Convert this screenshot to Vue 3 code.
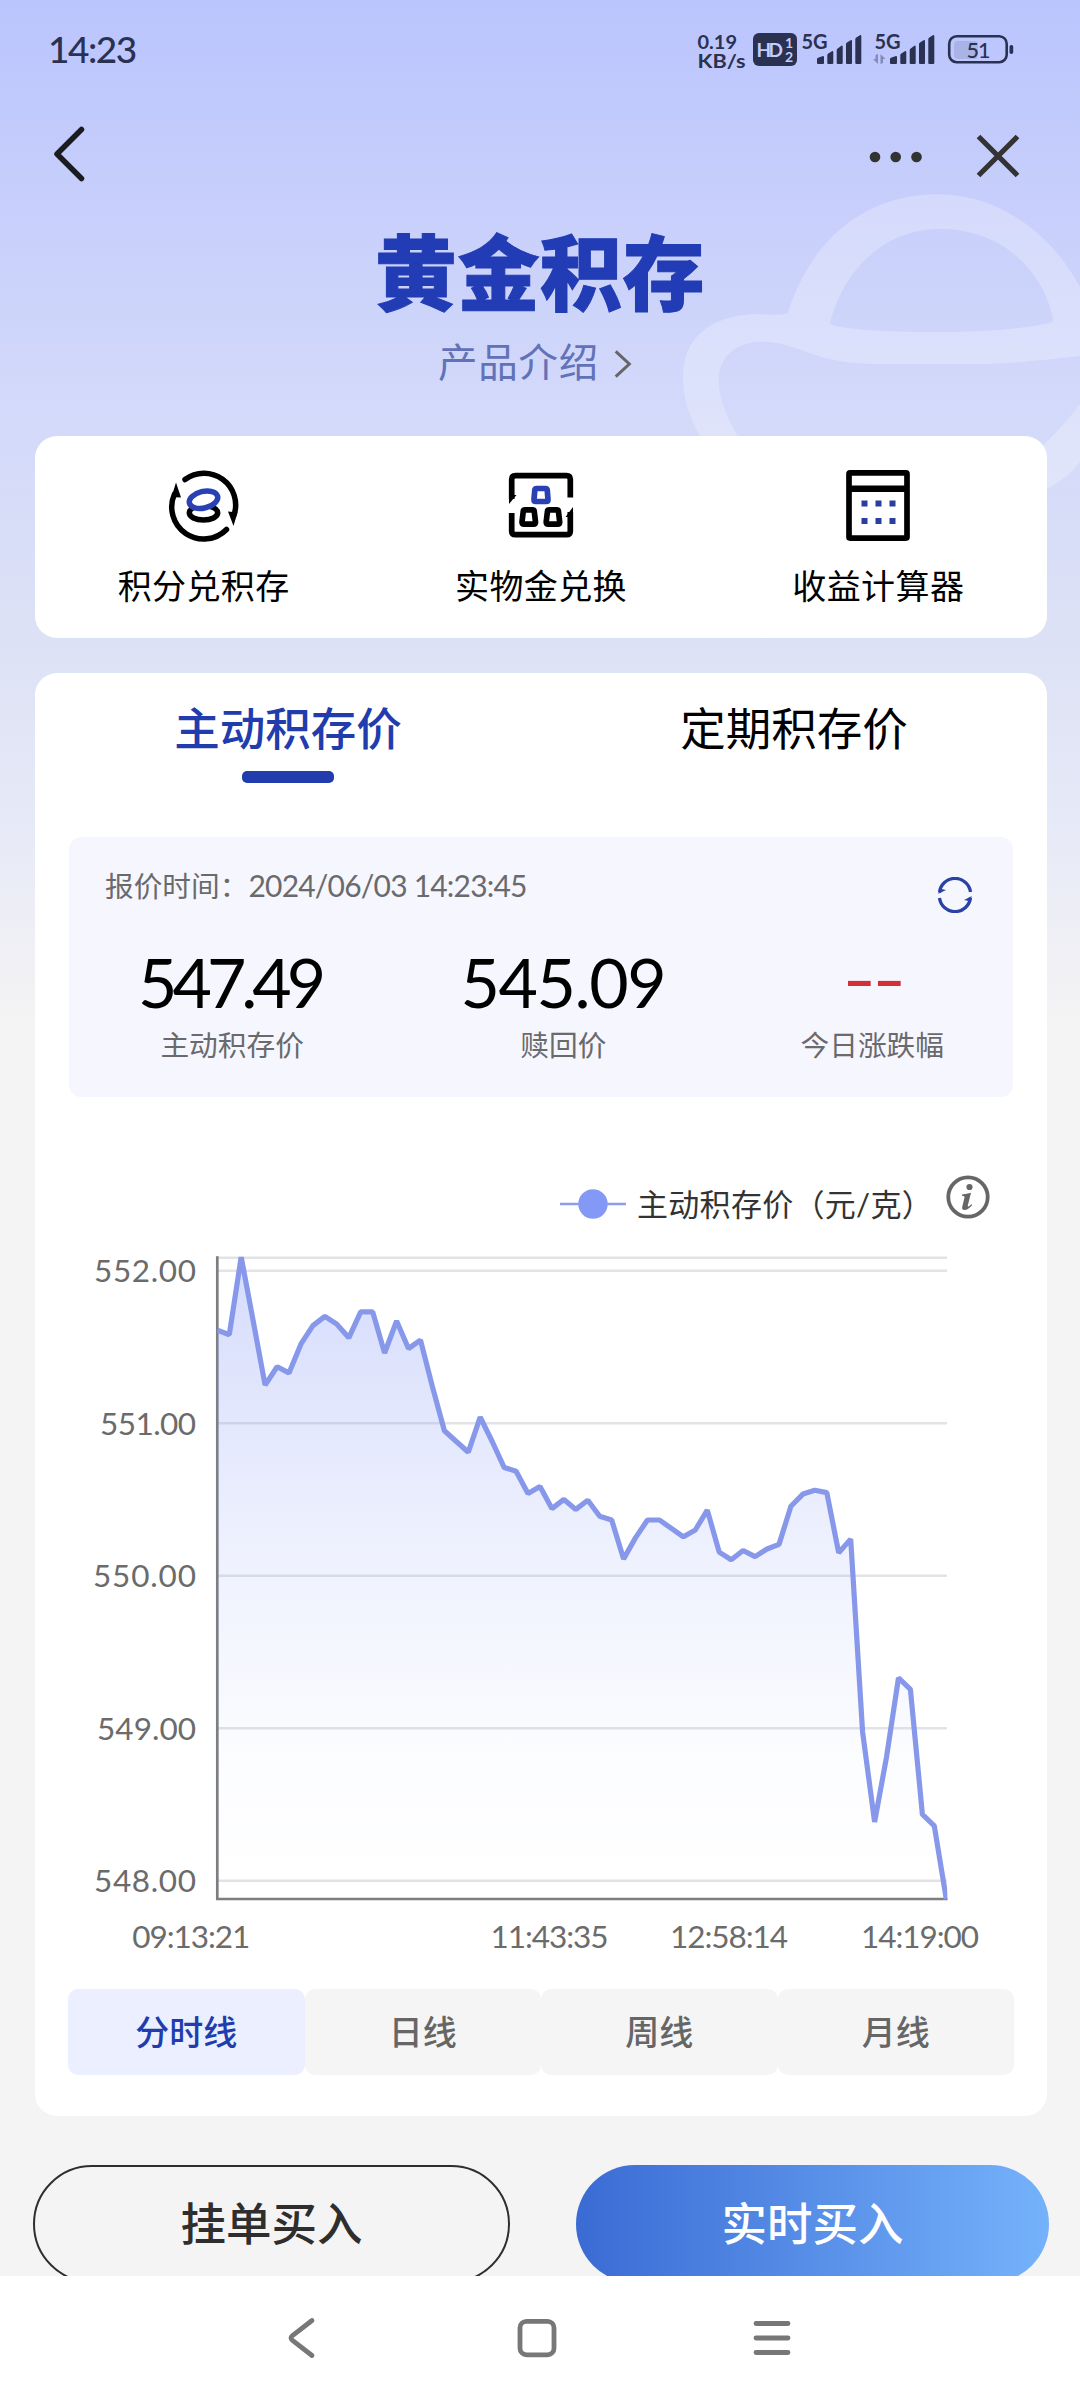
<script setup>
const shortcuts = [
  { key: 'points', label: '积分兑积存' },
  { key: 'physical', label: '实物金兑换' },
  { key: 'calc', label: '收益计算器' },
]
const quotes = [
  { key: 'buy', value: '547.49', label: '主动积存价' },
  { key: 'redeem', value: '545.09', label: '赎回价' },
  { key: 'change', value: '--', label: '今日涨跌幅' },
]
const periods = ['分时线', '日线', '周线', '月线']

const prices = [
  551.61, 551.58, 552.09, 551.67, 551.25, 551.37, 551.33, 551.52, 551.64, 551.7, 551.65,
  551.56, 551.73, 551.73, 551.46, 551.67, 551.49, 551.545, 551.24, 550.95, 550.88, 550.81,
  551.04, 550.88, 550.71, 550.685, 550.54, 550.585, 550.44, 550.5, 550.435, 550.495, 550.39,
  550.365, 550.11, 550.25, 550.365, 550.365, 550.31, 550.255, 550.3, 550.43, 550.155, 550.105,
  550.165, 550.125, 550.175, 550.205, 550.455, 550.535, 550.56, 550.545, 550.15, 550.24,
  548.975, 548.385, 548.81, 549.33, 549.255, 548.435, 548.36, 547.88,
]
const plot = { left: 182.3, right: 911.3, top: 23.7, bottom: 665, y552: 36.7, unit: 152.5 }
const yOf = (p) => plot.y552 + (552 - p) * plot.unit
const step = (plot.right - plot.left) / (prices.length - 1)
const line = prices.map((p, i) => `${(plot.left + i * step).toFixed(1)},${yOf(p).toFixed(1)}`).join(' ')
const area = `${plot.left},${plot.bottom} ${line} ${plot.right},${plot.bottom}`
const yTicks = [
  { v: 552, w: 102 },
  { v: 551, w: 96 },
  { v: 550, w: 103 },
  { v: 549, w: 99 },
  { v: 548, w: 102 },
]
const xTicks = [
  { x: 155.8, text: '09:13:21' },
  { x: 514, text: '11:43:35' },
  { x: 693.5, text: '12:58:14' },
  { x: 884.5, text: '14:19:00' },
]
const signals = [142, 215]
const bars = [
  'M0 26.500v-4q0-1 1-1.300l5-1.700q1 0 1 1v6q0 1-1 1h-5q-1 0-1-1z',
  'M10.300 26.500v-8q0-1 1-1.500l4-2.500q1 0 1 1v11q0 1-1 1h-4q-1 0-1-1z',
  'M19.700 26.500v-13q0-1 1-1.500l4-3q1 0 1 1v16.500q0 1-1 1h-4q-1 0-1-1z',
  'M29 26.500v-19q0-1 1-1.500l4-2.500q1 0 1 1v22q0 1-1 1h-4q-1 0-1-1z',
  'M38.300 26.500v-24q0-1 1-1.500l4-2.500q1 0 1 1v27q0 1-1 1h-4q-1 0-1-1z',
]
</script>

<template>
  <div class="page">
    <div class="screen">
      <svg class="deco" width="420" height="360" viewBox="660 180 420 360">
        <path
          fill="#fff"
          fill-opacity=".25"
          fill-rule="evenodd"
          d="M700 436C688 415 683 396 683 377C683 340 708 314 760 314Q778 316 787.700 313.300C812 235 870 194.300 937 194.300C1005 194.300 1055 240 1080 287V356C1045 360 1010 364 973 364H880C850 364 830 360 815 355C795 348 780 341.700 762 341.700C735 341.700 718.700 358 718.700 380C718.700 400 728 419 738 436ZM830 323C842 275 880 229 940 229C1000 229 1042 268 1053 318Q1054 322 1050 323C1020 329 985 332 940 332C900 332 865 331 840 327Q829 325 830 323Z"
        />
        <path fill="#fff" fill-opacity=".25" d="M1080 404Q1062 428 1042 446V491Q1064 482 1080 462Z" />
      </svg>

      <header class="status">
        <span class="clock">14:23</span>
        <svg width="330" height="44" viewBox="0 0 330 44" class="status-icons">
          <g fill="#2b3150">
            <text x="22.500" y="21" font-size="19" font-weight="700" textLength="39.500" lengthAdjust="spacingAndGlyphs">0.19</text>
            <text x="22.500" y="39.500" font-size="18.500" font-weight="700" textLength="48" lengthAdjust="spacingAndGlyphs">KB/s</text>
            <rect x="78" y="5" width="44" height="33" rx="6" />
            <g v-for="(x, i) in signals" :key="x">
              <text :x="x - 15.500" y="20.500" font-size="20" font-weight="700" textLength="26">5G</text>
              <path v-for="b in bars" :key="b" :d="b" :transform="`translate(${x} 8.500)`" />
              <g v-if="i" opacity=".4">
                <path d="M203 26v10l-5-5h2.500v-4z M205.500 36v-10l5 5h-2.500v4z" />
              </g>
            </g>
            <rect x="334.500" y="17" width="3.700" height="9" rx="1.800" />
          </g>
          <g fill="#c3ccfc" font-weight="700">
            <text x="81.500" y="29" font-size="19" textLength="26.500">HD</text>
            <text x="110" y="20" font-size="14" textLength="8">1</text>
            <text x="110" y="34" font-size="14" textLength="9">2</text>
          </g>
          <rect x="274.200" y="8.200" width="57.500" height="26" rx="7.500" fill="none" stroke="#2b3150" stroke-width="2.600" />
        </svg>
        <div class="battery"><i></i><b>51</b></div>
      </header>

      <nav class="topbar">
        <svg width="34" height="58" viewBox="0 0 34 58" fill="none" stroke="#1b1c22" stroke-width="5.500" stroke-linecap="round" stroke-linejoin="round">
          <path d="M29.500 4.500L5 29L29.500 53.500" />
        </svg>
        <div class="topbar-right">
          <svg width="54" height="12" viewBox="0 0 54 12" fill="#333" class="dots">
            <circle cx="6" cy="6" r="5.300" /><circle cx="26.700" cy="6" r="5.300" /><circle cx="47.500" cy="6" r="5.300" />
          </svg>
          <svg width="44" height="44" viewBox="0 0 44 44" stroke="#333" stroke-width="5.200" class="close">
            <path d="M2.500 2.500L41.500 41.500M41.500 2.500L2.500 41.500" />
          </svg>
        </div>
      </nav>

      <h1 class="title">黄金积存</h1>
      <div class="intro">
        <span>产品介绍</span>
        <svg width="20" height="30" viewBox="0 0 20 30" fill="none" stroke="#666" stroke-width="3">
          <path d="M2.700 2.300L16.300 15L2.700 27.700" />
        </svg>
      </div>

      <section class="card shortcuts">
        <div v-for="s in shortcuts" :key="s.key" class="shortcut">
          <svg v-if="s.key === 'points'" width="72" height="72" viewBox="0 0 72 72" fill="none" stroke-width="5.500" stroke-linecap="round">
            <path stroke="#000" d="M17 9.500A31.700 31.700 0 0 1 66 45M58.500 59.500A32 32 0 0 1 6.500 24" />
            <path fill="#000" d="M8 12.500L3.500 27L13 27.500Z M65.500 56L69.500 42.500L60 41.500Z" />
            <ellipse cx="35.500" cy="42.800" rx="14.200" ry="7.300" stroke="#000" />
            <ellipse cx="35.500" cy="29.700" rx="14.500" ry="8.300" transform="rotate(-14 35.500 29.700)" stroke="#2a41b5" fill="#fff" />
          </svg>
          <svg v-else-if="s.key === 'physical'" width="72" height="72" viewBox="0 0 72 72" fill="none" stroke-width="5.700" stroke-linejoin="round">
            <path stroke="#000" d="M6.700 29V9.500Q6.700 5.700 10.500 5.700H61.500Q65.300 5.700 65.300 9.500V27.500M65.300 42V61Q65.300 64.700 61.500 64.700H10.500Q6.700 64.700 6.700 61V43" />
            <path fill="#000" d="M4 34L11.500 25H4Z M68 37L60.500 47H68Z" />
            <path stroke="#2a41b5" d="M31.500 18.500H40.500Q42 18.500 42.200 20L43 29.500Q43 31.500 41.200 31.500H30.800Q29 31.500 29 29.500L29.800 20Q30 18.500 31.500 18.500Z" />
            <path stroke="#000" d="M20 39.800H27.500Q29 39.800 29.200 41L30.500 52Q30.500 54.200 28.500 54.200H19Q17 54.200 17 52L18.300 41Q18.500 39.800 20 39.800Z M44.200 39.800H51.700Q53.200 39.800 53.400 41L54.700 52Q54.700 54.200 52.700 54.200H43.200Q41.200 54.200 41.200 52L42.500 41Q42.700 39.800 44.200 39.800Z" />
          </svg>
          <svg v-else width="72" height="72" viewBox="0 0 72 72">
            <rect x="7" y="2.900" width="58" height="65.200" rx="1" fill="none" stroke="#000" stroke-width="5.700" />
            <path d="M5 18.700H67" stroke="#000" stroke-width="6.600" />
            <path d="M19.500 33.500h34M19.500 51h34" stroke="#2a3f9d" stroke-width="6" stroke-dasharray="6 8" />
          </svg>
          <span>{{ s.label }}</span>
        </div>
      </section>

      <section class="card main">
        <div class="tabs">
          <div class="tab active"><span>主动积存价</span><i></i></div>
          <div class="tab"><span>定期积存价</span></div>
        </div>

        <div class="quote">
          <div class="quote-head">
            <p>报价时间：<span>2024/06/03 14:23:45</span></p>
            <svg width="36" height="36" viewBox="0 0 36 36" fill="none" stroke="#2a41a5" stroke-width="3.300">
              <path d="M2.500 15.500A15.600 15.600 0 0 1 33.500 15M33.500 20.500A15.600 15.600 0 0 1 2.500 21" />
              <path d="M1 17L9 13L4.500 12Z M35 19L27 23L31.500 24Z" fill="#2a41a5" stroke="none" />
            </svg>
          </div>
          <div class="quote-row">
            <div v-for="q in quotes" :key="q.key" class="quote-item" :class="q.key">
              <strong>{{ q.value }}</strong>
              <span>{{ q.label }}</span>
            </div>
          </div>
        </div>

        <div class="legend">
          <svg width="66" height="32" viewBox="0 0 66 32">
            <path d="M0 16H66" stroke="#8d9df0" stroke-width="2.600" />
            <circle cx="33" cy="16" r="14.700" fill="#8499f6" />
          </svg>
          <span>主动积存价（元/克）</span>
          <svg class="info" width="44" height="44" viewBox="0 0 44 44">
            <circle cx="22" cy="22" r="19.700" fill="none" stroke="#666" stroke-width="3.800" />
            <circle cx="23.500" cy="12" r="3.100" fill="#666" />
            <path d="M16 19.500Q21 19 25 17.800L21.800 30.500Q21.500 32 23 31.200L25.500 29.200L26.300 30Q22 35 18.500 35Q15.500 35 16.300 31.500L18.500 22.500Q18.800 20.800 16 20.800Z" fill="#666" />
          </svg>
        </div>

        <svg class="chart" width="1012" height="740" viewBox="0 0 1012 740">
          <defs>
            <linearGradient id="fade" x1="0" y1="0" x2="0" y2="1">
              <stop offset="0" stop-color="#8499f6" stop-opacity=".34" />
              <stop offset=".5" stop-color="#8499f6" stop-opacity=".12" />
              <stop offset=".8" stop-color="#8499f6" stop-opacity=".02" />
              <stop offset="1" stop-color="#8499f6" stop-opacity="0" />
            </linearGradient>
            <clipPath id="plot"><rect x="182.300" y="22.500" width="730" height="643.500" /></clipPath>
          </defs>
          <g stroke="#e2e3e6" stroke-width="2.600">
            <path :d="`M${plot.left} ${plot.top}H912`" />
            <path v-for="t in yTicks" :key="t.v" :d="`M${plot.left} ${yOf(t.v)}H912`" />
          </g>
          <path d="M182.300 22.300V665H912.500" fill="none" stroke="#7d7e82" stroke-width="2.700" />
          <g clip-path="url(#plot)">
            <polygon :points="area" fill="url(#fade)" />
            <polyline :points="line" fill="none" stroke="#8798ea" stroke-width="5.200" stroke-linejoin="bevel" />
          </g>
          <g class="axis-text">
            <text v-for="t in yTicks" :key="t.v" :x="161 - t.w" :y="yOf(t.v) + 11.500" :textLength="t.w">{{ t.v.toFixed(2) }}</text>
            <text v-for="t in xTicks" :key="t.text" :x="t.x - 58.500" y="713.500" textLength="118">{{ t.text }}</text>
          </g>
        </svg>

        <div class="periods">
          <span v-for="(p, i) in periods" :key="p" :class="{ on: i === 0 }">{{ p }}</span>
        </div>
      </section>

      <div class="actions">
        <button class="outline">挂单买入</button>
        <button class="solid">实时买入</button>
      </div>
    </div>

    <footer class="sysnav">
      <svg width="40" height="42" viewBox="0 0 40 42"><path d="M30 3.500L10.500 18.500Q7.500 21 10.500 23.500L30 38.500" /></svg>
      <svg width="42" height="42" viewBox="0 0 42 42"><rect x="4" y="4.300" width="34" height="33.500" rx="6.500" /></svg>
      <svg width="40" height="42" viewBox="0 0 40 42"><path d="M4 6.500H36M4 21H36M4 35.500H36" /></svg>
    </footer>
  </div>
</template>

<style>
body {
  margin: 0;
}
</style>

<style scoped>
.page {
  width: 1080px;
  height: 2400px;
  overflow: hidden;
  display: flex;
  flex-direction: column;
  background: #fff;
  font-family: Lato, "Noto Sans CJK SC", sans-serif;
  color: #000;
}
.page svg {
  display: block;
  flex: none;
}
.screen {
  position: relative;
  height: 2276px;
  flex: none;
  overflow: hidden;
  background: linear-gradient(180deg, #bac5fe 0, #c8cffb 215px, #d2d9fa 400px, #dde2f5 655px, #e6e9f7 820px, #efeff5 940px, #f4f4f4 1030px);
}
.deco {
  position: absolute;
  right: 0;
  top: 180px;
}
.status {
  height: 100px;
  display: flex;
  position: relative;
  justify-content: space-between;
  align-items: flex-start;
}
.clock {
  margin: 29px 0 0 48px;
  font-size: 37px;
  line-height: 40px;
  font-weight: 500;
  letter-spacing: -1.5px;
  color: #2b3150;
}
.status-icons {
  margin: 28px 75px 0 0;
  overflow: visible;
}
.battery {
  position: absolute;
  left: 949px;
  top: 36px;
  width: 58px;
  height: 28px;
  display: flex;
  align-items: center;
  justify-content: center;
}
.battery i {
  position: absolute;
  left: 5px;
  top: 5px;
  width: 24px;
  height: 18px;
  border-radius: 4px;
  background: #a9b3e6;
}
.battery b {
  position: relative;
  font-size: 21.5px;
  line-height: 28px;
  font-weight: 500;
  letter-spacing: -1px;
  color: #2b3150;
}
.topbar {
  height: 110px;
  display: flex;
  align-items: center;
  justify-content: space-between;
  padding: 0 60px 2px 52px;
  box-sizing: border-box;
}
.topbar-right {
  display: flex;
  align-items: center;
  gap: 53px;
}
.dots {
  margin-top: 5px;
}
.close {
  margin-top: 3px;
}
.title {
  margin: 12px 0 0;
  text-align: center;
  font-size: 82px;
  line-height: 100px;
  font-weight: 900;
  letter-spacing: 0.6px;
  color: #213cb4;
  -webkit-text-stroke: 1px #213cb4;
}
.intro {
  margin-top: 12px;
  height: 60px;
  display: flex;
  justify-content: center;
  align-items: center;
  gap: 14px;
  padding-right: 9px;
  font-size: 39.500px;
  letter-spacing: 0.8px;
  color: #6272b9;
}
.intro span {
  line-height: 60px;
  margin-top: -5px;
}
.card {
  margin: 0 33px 0 35px;
  background: #fff;
  border-radius: 22px;
}
.shortcuts {
  margin-top: 42px;
  height: 202px;
  padding-top: 34px;
  box-sizing: border-box;
  display: flex;
}
.shortcut {
  flex: 1;
  display: flex;
  flex-direction: column;
  align-items: center;
}
.shortcut span {
  margin-top: 22px;
  font-size: 34px;
  line-height: 44px;
  letter-spacing: 0.4px;
}
.main {
  margin-top: 35px;
  padding: 26px 0 41px;
}
.tabs {
  display: flex;
  height: 84px;
}
.tab {
  flex: 1;
  display: flex;
  flex-direction: column;
  align-items: center;
  font-size: 45.500px;
  line-height: 60px;
}
.tab.active {
  color: #213cad;
  font-weight: 500;
}
.tab i {
  margin-top: 12px;
  width: 92px;
  height: 12px;
  border-radius: 5px;
  background: #213cad;
}
.quote {
  margin: 54px 34px 0;
  height: 260px;
  padding: 28px 40px 0 36px;
  box-sizing: border-box;
  border-radius: 12px;
  background: #f6f7fe;
}
.quote-head {
  display: flex;
  justify-content: space-between;
  color: #6a6a6d;
}
.quote-head p {
  margin: 0;
  font-size: 28.700px;
  line-height: 40px;
}
.quote-head p span {
  font-size: 30px;
  letter-spacing: -0.8px;
}
.quote-head svg {
  margin-top: 12px;
}
.quote-row {
  margin: 34px 29px 0 33px;
  display: flex;
  justify-content: space-between;
}
.quote-item {
  display: flex;
  flex-direction: column;
  align-items: center;
}
.quote-item strong {
  font-size: 68px;
  line-height: 70px;
  font-weight: 400;
}
.quote-item span {
  margin-top: 8px;
  font-size: 28.700px;
  line-height: 40px;
  color: #6a6a6d;
}
.quote-item.buy strong {
  letter-spacing: -5px;
  margin-right: 5px;
}
.quote-item.redeem strong {
  letter-spacing: -1.4px;
  margin-right: 1px;
}
.quote-item.change strong {
  height: 66px;
  margin-bottom: 4px;
  line-height: 62px;
  letter-spacing: -3px;
  color: #d32f36;
  transform: scaleX(1.35);
}
.legend {
  margin-top: 77px;
  height: 60px;
  padding-right: 57px;
  display: flex;
  align-items: center;
  justify-content: flex-end;
}
.legend span {
  margin-left: 11px;
  font-size: 31px;
  line-height: 40px;
  letter-spacing: 0.3px;
  color: #333;
}
.legend .info {
  margin: -15px 0 0 13px;
}
.axis-text {
  font-size: 31.500px;
  fill: #6b6b6b;
}
.periods {
  margin: 15px 33px 0;
  display: flex;
}
.periods span {
  flex: 1;
  height: 86px;
  line-height: 86px;
  border-radius: 10px;
  text-align: center;
  font-size: 34px;
  font-weight: 500;
  color: #666;
  background: #f5f5f5;
}
.periods .on {
  color: #213cad;
  background: #ebefff;
}
.actions {
  margin-top: 49px;
  padding: 0 31px 0 33px;
  display: flex;
  justify-content: space-between;
}
.actions button {
  box-sizing: border-box;
  height: 118px;
  border-radius: 59px;
  padding: 0 0 6px;
  font-family: inherit;
  font-size: 45.500px;
  font-weight: 500;
}
.outline {
  width: 477px;
  border: 2px solid #2e2e2e;
  background: none;
  color: #2e2e2e;
}
.solid {
  width: 473px;
  border: 0;
  color: #fff;
  background: linear-gradient(90deg, #3a6bd4, #75b2fb);
}
.sysnav {
  flex: 1;
  display: flex;
  justify-content: center;
  gap: 194px;
  padding: 41px 7px 0 0;
}
.sysnav svg {
  fill: none;
  stroke: #777;
  stroke-width: 4.8;
  stroke-linecap: round;
}
</style>
